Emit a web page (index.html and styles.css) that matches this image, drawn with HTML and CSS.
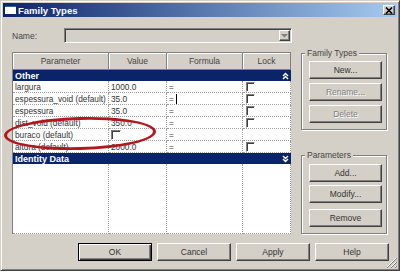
FILE: index.html
```html
<!DOCTYPE html>
<html lang="en">
<head>
  <meta charset="UTF-8" />
  <title>Family Types</title>
  <link rel="stylesheet" href="styles.css">
</head>
<body>
  <div class="window">
    <div class="titlebar">
      <span class="app-icon"></span>
      <span class="title">Family Types</span>
      <span class="close-btn">
        <svg width="8" height="7" viewBox="0 0 8 7"><path d="M1 0.5 L7 6.5 M7 0.5 L1 6.5" stroke="#000" stroke-width="1.6"/></svg>
      </span>
    </div>

    <div class="content">
      <div class="name-row">
        <label class="name-label">Name:</label>
        <div class="combo">
          <span class="combo-arrow">
            <svg width="7" height="4" viewBox="0 0 7 4"><path d="M0 0 H7 L3.5 3.5 Z" fill="#808080"/></svg>
          </span>
        </div>
      </div>

      <div class="main">
        <div class="grid">
          <div class="grid-row grid-head">
            <div>Parameter</div><div>Value</div><div>Formula</div><div>Lock</div>
          </div>

          <div class="group-row">
            <span>Other</span>
            <svg width="7" height="8" viewBox="0 0 7 8"><path d="M1 4 L3.5 1.5 L6 4 M1 7 L3.5 4.5 L6 7" stroke="#fff" stroke-width="1.4" fill="none"/></svg>
          </div>
          <div class="grid-row data-row">
            <div>largura</div><div>1000.0</div><div>=</div><div><span class="check lock"></span></div>
          </div>
          <div class="grid-row data-row">
            <div>espessura_void (default)</div><div>35.0</div><div>=<span class="caret"></span></div><div><span class="check lock"></span></div>
          </div>
          <div class="grid-row data-row">
            <div>espessura</div><div>35.0</div><div>=</div><div><span class="check lock"></span></div>
          </div>
          <div class="grid-row data-row">
            <div>dist_void (default)</div><div>350.0</div><div>=</div><div><span class="check lock"></span></div>
          </div>
          <div class="grid-row data-row">
            <div>buraco (default)</div><div><span class="check"></span></div><div>=</div><div></div>
          </div>
          <div class="grid-row data-row">
            <div>altura (default)</div><div>2000.0</div><div>=</div><div><span class="check lock"></span></div>
          </div>

          <div class="group-row">
            <span>Identity Data</span>
            <svg width="7" height="8" viewBox="0 0 7 8"><path d="M1 1 L3.5 3.5 L6 1 M1 4 L3.5 6.5 L6 4" stroke="#fff" stroke-width="1.4" fill="none"/></svg>
          </div>
          <div class="grid-row filler">
            <div></div><div></div><div></div><div></div>
          </div>
        </div>

        <div class="side">
          <div class="group group-types">
            <span class="group-title">Family Types</span>
            <button class="btn">New...</button>
            <button class="btn" disabled>Rename...</button>
            <button class="btn" disabled>Delete</button>
          </div>
          <div class="group group-params">
            <span class="group-title">Parameters</span>
            <button class="btn">Add...</button>
            <button class="btn">Modify...</button>
            <button class="btn btn-remove">Remove</button>
          </div>
        </div>
      </div>

      <div class="footer">
        <button class="btn btn-wide btn-default">OK</button>
        <button class="btn btn-wide">Cancel</button>
        <button class="btn btn-wide">Apply</button>
        <button class="btn btn-wide">Help</button>
      </div>
    </div>

    <!-- resize grip -->
    <svg class="grip" width="11" height="11" viewBox="0 0 11 11">
      <path d="M10 1 L1 10 M10 5 L5 10 M10 9 L9 10" stroke="#fff" stroke-width="1"/>
      <path d="M11 1 L1 11 M11 5 L5 11 M11 9 L9 11" stroke="#808080" stroke-width="1"/>
    </svg>

    <!-- red marker around the buraco row -->
    <div class="marker"></div>
  </div>
</body>
</html>
```

FILE: styles.css
```css
body {
  margin: 0;
  background-color: #fff;
  font-family: "Liberation Sans", Arial, sans-serif;
  font-size: 8.5px;
  color: #222;
}
.window {
  position: relative;
  box-sizing: border-box;
  width: 400px;
  height: 271px;
  padding: 2px;
  background-color: #d4d0c8;
  border: 1px solid;
  border-color: #d4d0c8 #404040 #404040 #d4d0c8;
  box-shadow: inset 1px 1px #fff, inset -1px -1px #808080;
}
.titlebar {
  display: flex;
  align-items: center;
  height: 14px;
  padding: 0 2px;
  background: linear-gradient(to right, #0a246a, #a6caf0);
}
.app-icon {
  width: 11px;
  height: 8px;
  margin-right: 2px;
  background-color: #fff;
  border-top: 1px solid #3a5a9a;
  box-sizing: border-box;
}
.title {
  flex: 1;
  color: #fff;
  font-weight: bold;
  font-size: 9.5px;
}
.close-btn {
  display: flex;
  align-items: center;
  justify-content: center;
  box-sizing: border-box;
  width: 12px;
  height: 10px;
  background-color: #d4d0c8;
  border: 1px solid;
  border-color: #fff #404040 #404040 #fff;
  box-shadow: inset -1px -1px #808080;
}
.content {
  padding: 11px 0 0 9px;
}
.name-row {
  display: flex;
  align-items: center;
  height: 15px;
}
.name-label {
  width: 52px;
  color: #444;
}
.combo {
  box-sizing: border-box;
  width: 228px;
  height: 15px;
  display: flex;
  justify-content: flex-end;
  padding: 1px;
  border: 1px solid;
  border-color: #808080 #fff #fff #808080;
  box-shadow: inset 1px 1px #404040;
  background-color: #d4d0c8;
}
.combo-arrow {
  display: flex;
  align-items: center;
  justify-content: center;
  box-sizing: border-box;
  width: 11px;
  height: 11px;
  border: 1px solid;
  border-color: #fff #404040 #404040 #fff;
  box-shadow: inset -1px -1px #808080;
}
.main {
  display: flex;
  gap: 10px;
  margin-top: 9px;
}
.grid {
  box-sizing: border-box;
  display: flex;
  flex-direction: column;
  width: 279px;
  height: 182px;
  background-color: #fff;
  border-top: 1px solid #808080;
  border-left: 1px solid #808080;
}
.grid-row {
  display: grid;
  grid-template-columns: 96px 58px 76px 48px;
}
.grid-head {
  height: 17px;
}
.grid-head div {
  display: flex;
  align-items: center;
  justify-content: center;
  background-color: #d4d0c8;
  border-right: 1px solid #808080;
  border-bottom: 1px solid #808080;
  box-shadow: inset 1px 1px #fff;
  color: #444;
}
.group-row {
  display: flex;
  align-items: center;
  justify-content: space-between;
  height: 11px;
  padding: 0 2px;
  background-color: #0a246a;
  color: #fff;
  font-weight: bold;
  font-size: 9px;
}
.data-row {
  height: 12px;
}
.data-row div {
  display: flex;
  align-items: center;
  padding-left: 2px;
  border-right: 1px dotted #a0a0a0;
  border-bottom: 1px dotted #a0a0a0;
  white-space: nowrap;
  overflow: hidden;
  color: #333;
  font-size: 8.3px;
}
.check {
  box-sizing: border-box;
  width: 10px;
  height: 10px;
  background-color: #fff;
  border: 1px solid;
  border-color: #808080 #fff #fff #808080;
  box-shadow: inset 1px 1px #404040;
}
.lock {
  width: 9px;
  height: 10px;
  margin: 1px 0 0 1px;
}
.caret {
  width: 1px;
  height: 10px;
  margin-left: 2px;
  background-color: #000;
}
.filler {
  flex: 1;
}
.filler div {
  border-right: 1px dotted #a0a0a0;
  border-bottom: 1px dotted #a0a0a0;
}
.side {
  width: 86px;
}
.group {
  position: relative;
  display: flex;
  flex-direction: column;
  gap: 4px;
  padding: 7px 4px 6px 7px;
  border: 1px solid #808080;
  box-shadow: inset 1px 1px #fff, 1px 1px #fff;
}
.group-types {
  margin-top: 1px;
}
.group-params {
  margin-top: 25px;
  padding-top: 8px;
  gap: 3px;
}
.group-title {
  position: absolute;
  top: -6px;
  left: 3px;
  padding: 0 2px;
  background-color: #d4d0c8;
  color: #444;
}
.btn {
  box-sizing: border-box;
  width: 73px;
  height: 18px;
  padding: 0;
  font-family: inherit;
  font-size: 8.5px;
  color: #333;
  background-color: #d4d0c8;
  border: 1px solid;
  border-color: #fff #404040 #404040 #fff;
  box-shadow: inset -1px -1px #808080;
}
.btn:disabled {
  color: #808080;
  text-shadow: 1px 1px #fff;
}
.btn-remove {
  margin-top: 3px;
}
.footer {
  display: flex;
  gap: 5px;
  margin-top: 9px;
  padding-left: 66px;
}
.btn-wide {
  width: 74px;
}
.btn-default {
  border: 1px solid #000;
  box-shadow: inset 1px 1px #fff, inset -1px -1px #404040, inset -2px -2px #808080;
}
.grip {
  position: absolute;
  right: 2px;
  bottom: 2px;
}
.marker {
  position: absolute;
  left: 3px;
  top: 116px;
  width: 146px;
  height: 27px;
  border: 3px solid #b3161d;
  border-radius: 50%;
  transform: rotate(-1.5deg);
}
```
